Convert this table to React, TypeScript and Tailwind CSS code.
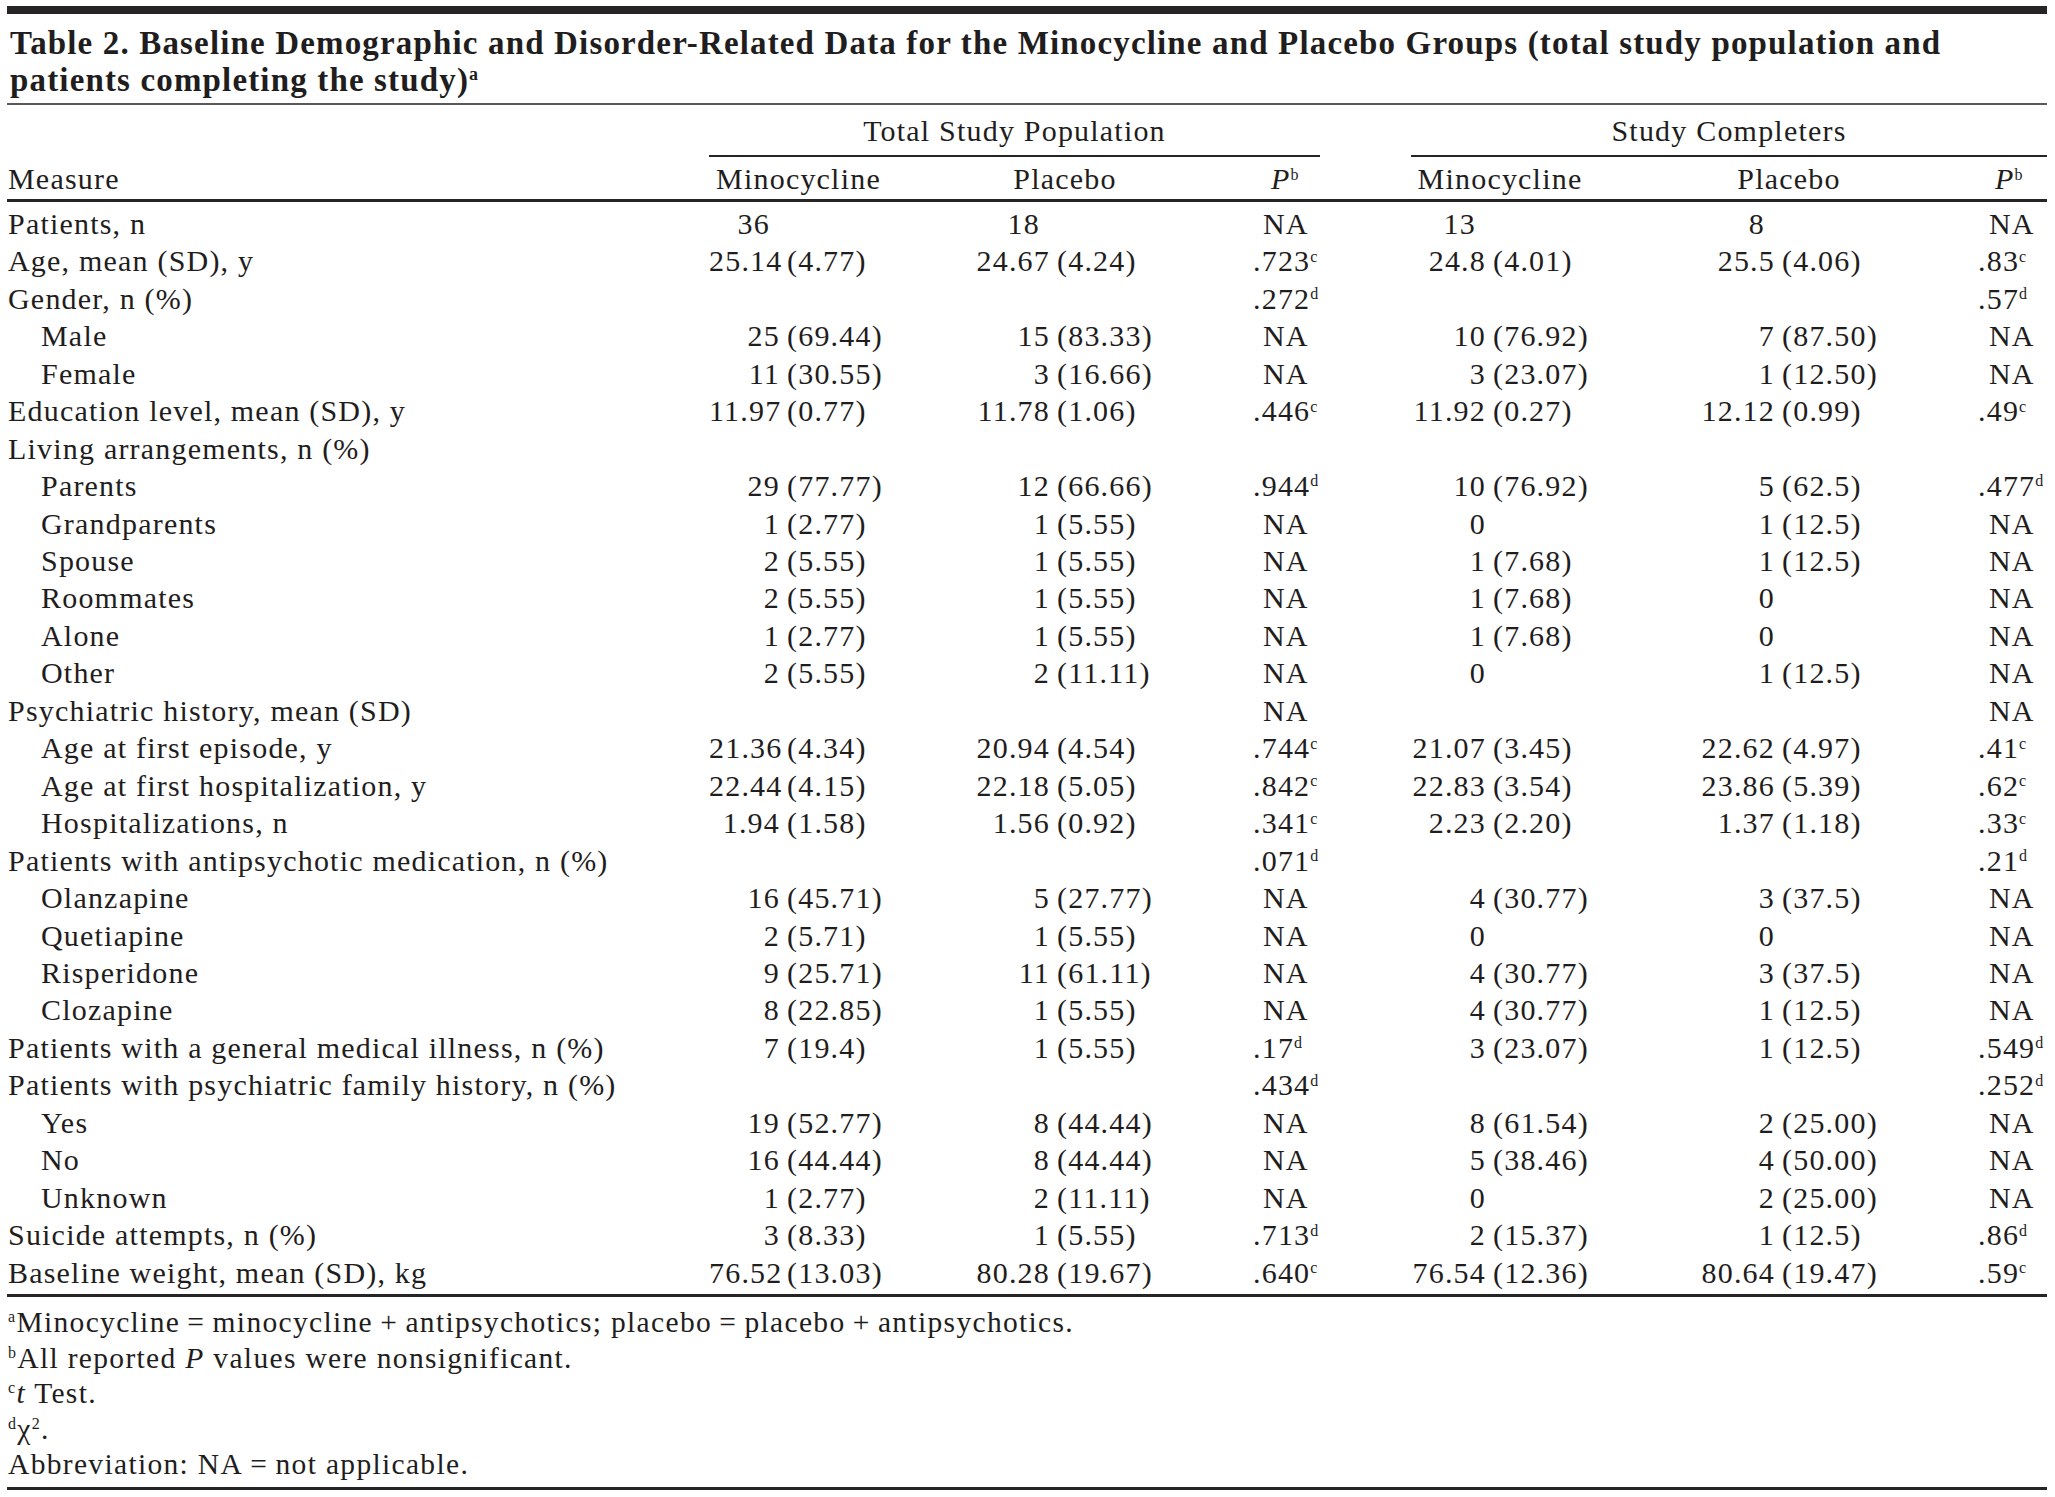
import React from "react";

type PV = string;

interface Row {
  label: string;
  indent?: boolean;
  m1?: string;
  p1?: string;
  pv1?: PV;
  m2?: string;
  p2?: string;
  pv2?: PV;
  lift?: boolean;
}

const rows: Row[] = [
  { label: "Patients, n", m1: "36", p1: "18", pv1: "NA", m2: "13", p2: "8", pv2: "NA", lift: true },
  { label: "Age, mean (SD), y", m1: "25.14 (4.77)", p1: "24.67 (4.24)", pv1: ".723c", m2: "24.8 (4.01)", p2: "25.5 (4.06)", pv2: ".83c" },
  { label: "Gender, n (%)", pv1: ".272d", pv2: ".57d" },
  { label: "Male", indent: true, m1: "25 (69.44)", p1: "15 (83.33)", pv1: "NA", m2: "10 (76.92)", p2: "7 (87.50)", pv2: "NA" },
  { label: "Female", indent: true, m1: "11 (30.55)", p1: "3 (16.66)", pv1: "NA", m2: "3 (23.07)", p2: "1 (12.50)", pv2: "NA" },
  { label: "Education level, mean (SD), y", m1: "11.97 (0.77)", p1: "11.78 (1.06)", pv1: ".446c", m2: "11.92 (0.27)", p2: "12.12 (0.99)", pv2: ".49c" },
  { label: "Living arrangements, n (%)" },
  { label: "Parents", indent: true, m1: "29 (77.77)", p1: "12 (66.66)", pv1: ".944d", m2: "10 (76.92)", p2: "5 (62.5)", pv2: ".477d" },
  { label: "Grandparents", indent: true, m1: "1 (2.77)", p1: "1 (5.55)", pv1: "NA", m2: "0", p2: "1 (12.5)", pv2: "NA" },
  { label: "Spouse", indent: true, m1: "2 (5.55)", p1: "1 (5.55)", pv1: "NA", m2: "1 (7.68)", p2: "1 (12.5)", pv2: "NA" },
  { label: "Roommates", indent: true, m1: "2 (5.55)", p1: "1 (5.55)", pv1: "NA", m2: "1 (7.68)", p2: "0", pv2: "NA" },
  { label: "Alone", indent: true, m1: "1 (2.77)", p1: "1 (5.55)", pv1: "NA", m2: "1 (7.68)", p2: "0", pv2: "NA" },
  { label: "Other", indent: true, m1: "2 (5.55)", p1: "2 (11.11)", pv1: "NA", m2: "0", p2: "1 (12.5)", pv2: "NA" },
  { label: "Psychiatric history, mean (SD)", pv1: "NA", pv2: "NA" },
  { label: "Age at first episode, y", indent: true, m1: "21.36 (4.34)", p1: "20.94 (4.54)", pv1: ".744c", m2: "21.07 (3.45)", p2: "22.62 (4.97)", pv2: ".41c" },
  { label: "Age at first hospitalization, y", indent: true, m1: "22.44 (4.15)", p1: "22.18 (5.05)", pv1: ".842c", m2: "22.83 (3.54)", p2: "23.86 (5.39)", pv2: ".62c" },
  { label: "Hospitalizations, n", indent: true, m1: "1.94 (1.58)", p1: "1.56 (0.92)", pv1: ".341c", m2: "2.23 (2.20)", p2: "1.37 (1.18)", pv2: ".33c" },
  { label: "Patients with antipsychotic medication, n (%)", pv1: ".071d", pv2: ".21d" },
  { label: "Olanzapine", indent: true, m1: "16 (45.71)", p1: "5 (27.77)", pv1: "NA", m2: "4 (30.77)", p2: "3 (37.5)", pv2: "NA" },
  { label: "Quetiapine", indent: true, m1: "2 (5.71)", p1: "1 (5.55)", pv1: "NA", m2: "0", p2: "0", pv2: "NA" },
  { label: "Risperidone", indent: true, m1: "9 (25.71)", p1: "11 (61.11)", pv1: "NA", m2: "4 (30.77)", p2: "3 (37.5)", pv2: "NA" },
  { label: "Clozapine", indent: true, m1: "8 (22.85)", p1: "1 (5.55)", pv1: "NA", m2: "4 (30.77)", p2: "1 (12.5)", pv2: "NA" },
  { label: "Patients with a general medical illness, n (%)", m1: "7 (19.4)", p1: "1 (5.55)", pv1: ".17d", m2: "3 (23.07)", p2: "1 (12.5)", pv2: ".549d" },
  { label: "Patients with psychiatric family history, n (%)", pv1: ".434d", pv2: ".252d" },
  { label: "Yes", indent: true, m1: "19 (52.77)", p1: "8 (44.44)", pv1: "NA", m2: "8 (61.54)", p2: "2 (25.00)", pv2: "NA" },
  { label: "No", indent: true, m1: "16 (44.44)", p1: "8 (44.44)", pv1: "NA", m2: "5 (38.46)", p2: "4 (50.00)", pv2: "NA" },
  { label: "Unknown", indent: true, m1: "1 (2.77)", p1: "2 (11.11)", pv1: "NA", m2: "0", p2: "2 (25.00)", pv2: "NA" },
  { label: "Suicide attempts, n (%)", m1: "3 (8.33)", p1: "1 (5.55)", pv1: ".713d", m2: "2 (15.37)", p2: "1 (12.5)", pv2: ".86d" },
  { label: "Baseline weight, mean (SD), kg", m1: "76.52 (13.03)", p1: "80.28 (19.67)", pv1: ".640c", m2: "76.54 (12.36)", p2: "80.64 (19.47)", pv2: ".59c" },
];

// value aligned on the opening parenthesis
function Val({ v, numClass, lift }: { v?: string; numClass: string; lift?: boolean }) {
  if (!v) return <div />;
  const i = v.indexOf(" (");
  const num = i >= 0 ? v.slice(0, i) : v;
  const par = i >= 0 ? v.slice(i + 1) : "";
  return (
    <div className="flex whitespace-nowrap">
      <span className={`${numClass} shrink-0 text-right ${lift ? "pr-[17px]" : "pr-[7px]"}`}>{num}</span>
      <span>{par}</span>
    </div>
  );
}

function PVal({ v, pad, naPad }: { v?: string; pad: string; naPad: string }) {
  if (!v) return <div />;
  if (v === "NA") return <div className={naPad}>NA</div>;
  const sup = v.slice(-1);
  return (
    <div className={`${pad} whitespace-nowrap`}>
      {v.slice(0, -1)}
      <sup className="text-[16px] -top-[0.6em]">{sup}</sup>
    </div>
  );
}

function PHead({ pad }: { pad: string }) {
  return (
    <div className={pad}>
      <i>P</i>
      <sup className="text-[16px] -top-[0.6em]">b</sup>
    </div>
  );
}

const grid =
  "grid grid-cols-[702px_179px_354px_78px_91px_178px_379px_79px]";

export default function App() {
  return (
    <div
      className="w-[2055px] bg-white pl-[7px] pr-[8px] text-[#1f1d1d]"
      style={{ fontFamily: '"Liberation Serif", "Times New Roman", serif' }}
    >
      <div className="mt-[6px] h-[8px] bg-[#262424]" />
      <div className="mt-[11px] pl-[3px] text-[33px] font-bold leading-[36.5px] tracking-[0.035em]">
        <div className="whitespace-nowrap">
          Table 2. Baseline Demographic and Disorder-Related Data for the Minocycline and Placebo Groups (total study
          population and
        </div>
        <div className="whitespace-nowrap">
          patients completing the study)
          <sup className="text-[18px] -top-[0.6em] font-bold">a</sup>
        </div>
      </div>
      <div className="mt-[5px] h-[2px] bg-[#5a5858]" />

      <div className="text-[30px] leading-[37.45px] tracking-[0.04em]">
        <div className={`${grid} mt-[7px]`}>
          <div />
          <div className="col-span-3 text-center">Total Study Population</div>
          <div />
          <div className="col-span-3 text-center">Study Completers</div>
        </div>
        <div className={`${grid} mt-[6px]`}>
          <div />
          <div className="col-span-3 h-[2px] bg-[#262424]" />
          <div />
          <div className="col-span-3 h-[2px] bg-[#262424]" />
        </div>
        <div className={`${grid} mt-[3px]`}>
          <div className="pl-[1px]">Measure</div>
          <div className="text-center">Minocycline</div>
          <div className="text-center">Placebo</div>
          <PHead pad="pl-[29px]" />
          <div />
          <div className="text-center">Minocycline</div>
          <div className="pl-[21px] text-center">Placebo</div>
          <PHead pad="pl-[27px]" />
        </div>
        <div className="mt-[1px] h-[3px] bg-[#262424]" />

        <div className="mt-[3px]">
          {rows.map((r) => (
            <div key={r.label} className={grid}>
              <div className={`whitespace-nowrap ${r.indent ? "pl-[34px]" : "pl-[1px]"}`}>{r.label}</div>
              <Val v={r.m1} numClass="w-[78px]" lift={r.lift} />
              <Val v={r.p1} numClass="w-[169px]" lift={r.lift} />
              <PVal v={r.pv1} pad="pl-[11px]" naPad="pl-[21px]" />
              <div />
              <Val v={r.m2} numClass="w-[82px]" lift={r.lift} />
              <Val v={r.p2} numClass="w-[193px]" lift={r.lift} />
              <PVal v={r.pv2} pad="pl-[10px]" naPad="pl-[21px]" />
            </div>
          ))}
        </div>
        <div className="mt-[3px] h-[3px] bg-[#262424]" />
      </div>

      <div className="pt-[8px] pl-[1px] text-[29.5px] leading-[35.5px] tracking-[0.045em]">
        <div>
          <sup className="text-[16px] -top-[0.6em]">a</sup>Minocycline{"\u2009=\u2009"}minocycline{"\u2009+\u2009"}antipsychotics;
          placebo{"\u2009=\u2009"}placebo{"\u2009+\u2009"}antipsychotics.
        </div>
        <div>
          <sup className="text-[16px] -top-[0.6em]">b</sup>All reported <i>P</i> values were nonsignificant.
        </div>
        <div>
          <sup className="text-[16px] -top-[0.6em]">c</sup>
          <i>t</i> Test.
        </div>
        <div>
          <sup className="text-[16px] -top-[0.6em]">d</sup>χ<sup className="text-[16px] -top-[0.6em]">2</sup>.
        </div>
        <div>Abbreviation: NA{"\u2009=\u2009"}not applicable.</div>
      </div>
      <div className="mt-[4px] h-[3px] bg-[#262424]" />
    </div>
  );
}
